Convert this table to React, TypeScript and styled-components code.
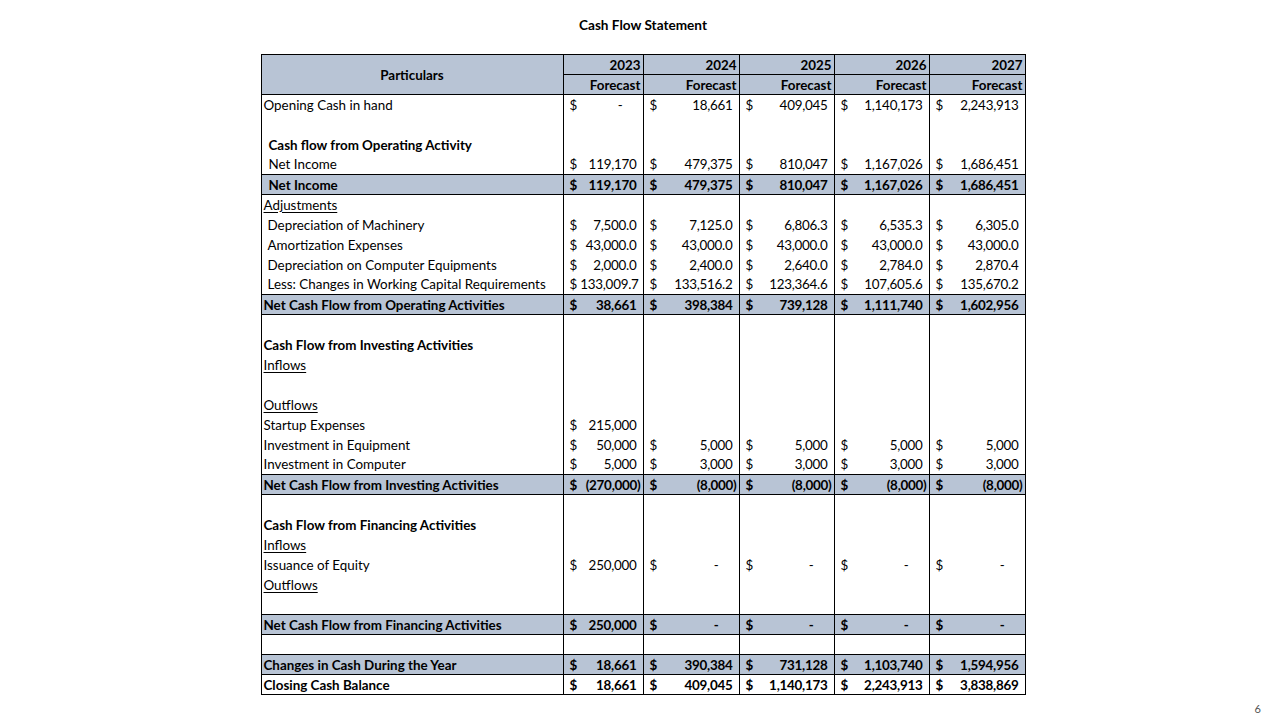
import React from "react";
import styled, { createGlobalStyle, css } from "styled-components";

const Global = createGlobalStyle`
  html, body { margin: 0; padding: 0; background: #ffffff; }
  body { font-family: Lato, "Open Sans", sans-serif; color: #000; }
`;

const Page = styled.div`
  width: 1280px;
  height: 720px;
  position: relative;
  display: flex;
  flex-direction: column;
  align-items: center;
  box-sizing: border-box;
  padding-left: 6px;
`;

const Title = styled.h1`
  margin: 16px 0 0 0;
  height: 38px;
  font-size: 13.6px;
  font-weight: 700;
  line-height: 18px;
`;

const Sheet = styled.table`
  border-collapse: collapse;
  table-layout: fixed;
  width: 764px;
  font-size: 13.4px;
  border: 1px solid #000;
`;

const HeadCell = styled.th<{ $align?: string }>`
  background: #b8c4d5;
  font-weight: 700;
  text-align: ${(p) => p.$align || "right"};
  border: 1px solid #000;
  height: 19px;
  padding: 0 2px 0 2px;
  line-height: 18px;
`;

type Kind = "plain" | "heading" | "under" | "blank" | "total" | "boldplain";

const Row = styled.tr<{ $kind: Kind }>`
  height: 20px;
  ${(p) =>
    (p.$kind === "total" || p.$kind === "boldplain") &&
    css`
      & > td {
        border-top: 1px solid #000;
        border-bottom: 1px solid #000;
      }
    `}
  ${(p) =>
    p.$kind === "total" &&
    css`
      & > td {
        background: #b8c4d5;
      }
    `}
`;

const LabelCell = styled.td<{ $indent: number; $bold?: boolean; $under?: boolean }>`
  border-left: 1px solid #000;
  border-right: 1px solid #000;
  padding: 0 0 0 ${(p) => 2 + p.$indent}px;
  height: 19px;
  line-height: 18px;
  white-space: nowrap;
  font-weight: ${(p) => (p.$bold ? 700 : 400)};
  text-decoration: ${(p) => (p.$under ? "underline" : "none")};
  text-underline-offset: 2px;
`;

const ValCell = styled.td<{ $bold?: boolean }>`
  border-left: 1px solid #000;
  border-right: 1px solid #000;
  padding: 0;
  height: 19px;
  line-height: 18px;
  overflow: hidden;
  font-weight: ${(p) => (p.$bold ? 700 : 400)};
`;

const Money = styled.div`
  display: flex;
  justify-content: space-between;
  gap: 3px;
  padding-left: 6px;
  white-space: nowrap;
`;

const Amount = styled.span<{ $pad: number }>`
  padding-right: ${(p) => p.$pad}px;
  letter-spacing: -0.25px;
`;

const PageNum = styled.div`
  position: absolute;
  right: 19px;
  bottom: 5px;
  font-size: 11px;
  color: #555;
`;

type RowData = { label: string; kind: Kind; indent: number; values?: (string | null)[] };

const rows: RowData[] = [
  { label: "Opening Cash in hand", kind: "plain", indent: 0, values: ["-", "18,661", "409,045", "1,140,173", "2,243,913"] },
  { label: "", kind: "blank", indent: 0 },
  { label: "Cash flow from Operating Activity", kind: "heading", indent: 5 },
  { label: "Net Income", kind: "plain", indent: 5, values: ["119,170", "479,375", "810,047", "1,167,026", "1,686,451"] },
  { label: "Net Income", kind: "total", indent: 5, values: ["119,170", "479,375", "810,047", "1,167,026", "1,686,451"] },
  { label: "Adjustments", kind: "under", indent: 0 },
  { label: "Depreciation of Machinery", kind: "plain", indent: 4, values: ["7,500.0", "7,125.0", "6,806.3", "6,535.3", "6,305.0"] },
  { label: "Amortization Expenses", kind: "plain", indent: 4, values: ["43,000.0", "43,000.0", "43,000.0", "43,000.0", "43,000.0"] },
  { label: "Depreciation on Computer Equipments", kind: "plain", indent: 4, values: ["2,000.0", "2,400.0", "2,640.0", "2,784.0", "2,870.4"] },
  { label: "Less: Changes in Working Capital Requirements", kind: "plain", indent: 4, values: ["133,009.7", "133,516.2", "123,364.6", "107,605.6", "135,670.2"] },
  { label: "Net Cash Flow from Operating Activities", kind: "total", indent: 0, values: ["38,661", "398,384", "739,128", "1,111,740", "1,602,956"] },
  { label: "", kind: "blank", indent: 0 },
  { label: "Cash Flow from Investing Activities", kind: "heading", indent: 0 },
  { label: "Inflows", kind: "under", indent: 0 },
  { label: "", kind: "blank", indent: 0 },
  { label: "Outflows", kind: "under", indent: 0 },
  { label: "Startup Expenses", kind: "plain", indent: 0, values: ["215,000", null, null, null, null] },
  { label: "Investment in Equipment", kind: "plain", indent: 0, values: ["50,000", "5,000", "5,000", "5,000", "5,000"] },
  { label: "Investment in Computer", kind: "plain", indent: 0, values: ["5,000", "3,000", "3,000", "3,000", "3,000"] },
  { label: "Net Cash Flow from Investing Activities", kind: "total", indent: 0, values: ["(270,000)", "(8,000)", "(8,000)", "(8,000)", "(8,000)"] },
  { label: "", kind: "blank", indent: 0 },
  { label: "Cash Flow from Financing Activities", kind: "heading", indent: 0 },
  { label: "Inflows", kind: "under", indent: 0 },
  { label: "Issuance of Equity", kind: "plain", indent: 0, values: ["250,000", "-", "-", "-", "-"] },
  { label: "Outflows", kind: "under", indent: 0 },
  { label: "", kind: "blank", indent: 0 },
  { label: "Net Cash Flow from Financing Activities", kind: "total", indent: 0, values: ["250,000", "-", "-", "-", "-"] },
  { label: "", kind: "blank", indent: 0 },
  { label: "Changes in Cash During the Year", kind: "total", indent: 0, values: ["18,661", "390,384", "731,128", "1,103,740", "1,594,956"] },
  { label: "Closing Cash Balance", kind: "boldplain", indent: 0, values: ["18,661", "409,045", "1,140,173", "2,243,913", "3,838,869"] },
];

const years = ["2023", "2024", "2025", "2026", "2027"];
const colWidths = [302, 80, 96, 95, 95, 96];

function padFor(v: string): number {
  if (v === "-") return 20;
  if (v.endsWith(")")) return 2;
  return 6;
}

export default function App() {
  return (
    <>
      <Global />
      <Page>
        <Title>Cash Flow Statement</Title>
        <Sheet>
          <colgroup>
            {colWidths.map((w, i) => (
              <col key={i} style={{ width: w }} />
            ))}
          </colgroup>
          <thead>
            <tr>
              <HeadCell rowSpan={2} $align="center">
                Particulars
              </HeadCell>
              {years.map((y) => (
                <HeadCell key={y}>{y}</HeadCell>
              ))}
            </tr>
            <tr>
              {years.map((y) => (
                <HeadCell key={y}>Forecast</HeadCell>
              ))}
            </tr>
          </thead>
          <tbody>
            {rows.map((r, i) => {
              const bold = r.kind === "heading" || r.kind === "total" || r.kind === "boldplain";
              return (
                <Row key={i} $kind={r.kind}>
                  <LabelCell $indent={r.indent} $bold={bold} $under={r.kind === "under"}>
                    {r.label}
                  </LabelCell>
                  {years.map((y, j) => {
                    const v = r.values ? r.values[j] : null;
                    return (
                      <ValCell key={y} $bold={bold}>
                        {v != null && (
                          <Money>
                            <span>$</span>
                            <Amount $pad={padFor(v)}>{v}</Amount>
                          </Money>
                        )}
                      </ValCell>
                    );
                  })}
                </Row>
              );
            })}
          </tbody>
        </Sheet>
        <PageNum>6</PageNum>
      </Page>
    </>
  );
}
